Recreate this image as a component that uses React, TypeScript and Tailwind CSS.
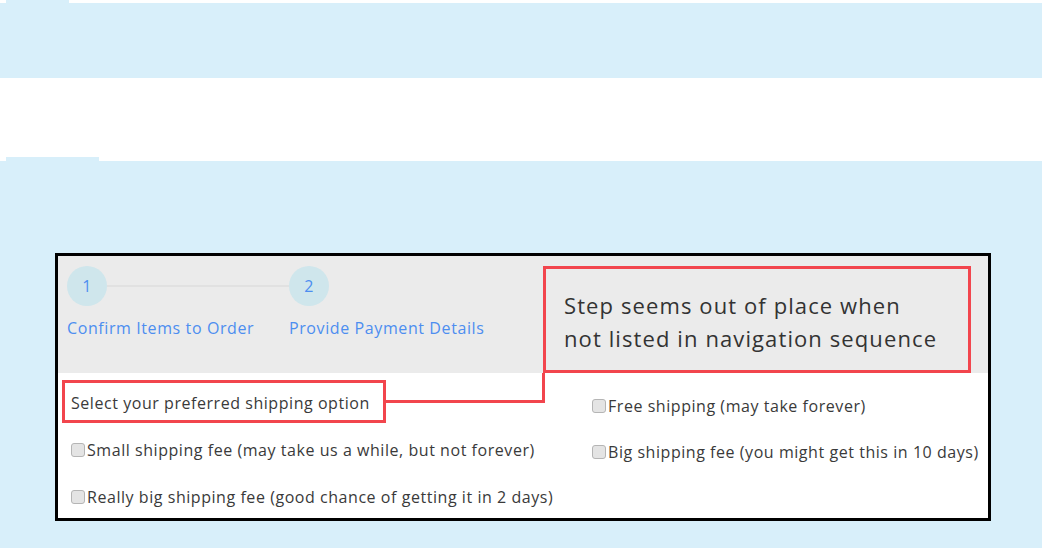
import React from "react";

const Check = () => (
  <span className="inline-block w-[14px] h-[14px] rounded-[3px] border border-[#b5b5b5] bg-[#e4e4e4] mr-[2px] shrink-0" />
);

const Option = ({ label }: { label: string }) => (
  <div className="flex items-center h-[22px]">
    <Check />
    <span>{label}</span>
  </div>
);

export default function App() {
  return (
    <div className="w-[1042px] h-[548px] bg-white flex flex-col overflow-hidden" style={{ fontFamily: '"Open Sans", "Noto Sans", sans-serif' }}>
      <div className="h-[3px] flex pl-[6px]">
        <div className="w-[63px] bg-[#d8effa]" />
      </div>
      <div className="h-[75px] bg-[#d8effa]" />
      <div className="h-[79px]" />
      <div className="h-[4px] flex pl-[6px]">
        <div className="w-[93px] bg-[#d8effa]" />
      </div>
      <div className="flex-1 bg-[#d8effa] pt-[92px] pl-[55px]">
        <div className="relative w-[936px] h-[268px] border-[3px] border-black bg-white flex flex-col">
          {/* header */}
          <div className="h-[117px] bg-[#ebebeb] flex pl-[9px] pt-[10px] tracking-[0.6px]">
            <div className="relative w-[222px] flex flex-col">
              <div className="absolute left-[40px] top-[19px] w-[182px] h-[2px] bg-[#e1e1e1]" />
              <div className="w-[40px] h-[40px] rounded-full bg-[#cfe6ec] flex items-center justify-center text-[16px] text-[#4d8ef0]">1</div>
              <div className="mt-[11px] text-[16px] leading-[22px] text-[#4d8ef0] whitespace-nowrap">Confirm Items to Order</div>
            </div>
            <div className="flex flex-col">
              <div className="w-[40px] h-[40px] rounded-full bg-[#cfe6ec] flex items-center justify-center text-[16px] text-[#4d8ef0]">2</div>
              <div className="mt-[11px] text-[16px] leading-[22px] text-[#4d8ef0] whitespace-nowrap">Provide Payment Details</div>
            </div>
          </div>
          {/* body */}
          <div className="flex pt-[19px] pl-[13px] text-[16px] leading-[22px] tracking-[0.55px] text-[#3a3a3a] whitespace-nowrap">
            <div className="w-[521px] flex flex-col gap-[25px]">
              <div className="h-[22px] flex items-center">Select your preferred shipping option</div>
              <Option label="Small shipping fee (may take us a while, but not forever)" />
              <Option label="Really big shipping fee (good chance of getting it in 2 days)" />
            </div>
            <div className="flex flex-col gap-[24px] pt-[3px]">
              <Option label="Free shipping (may take forever)" />
              <Option label="Big shipping fee (you might get this in 10 days)" />
            </div>
          </div>

          {/* annotations */}
          <div className="absolute left-[485px] top-[10px] w-[428px] h-[107px] border-[3px] border-[#f2454d] bg-[#ebebeb] pl-[18px] pt-[20px] text-[22px] leading-[33px] tracking-[1.1px] text-[#333333] whitespace-nowrap">
            <div>Step seems out of place when</div>
            <div>not listed in navigation sequence</div>
          </div>
          <div className="absolute left-[327px] top-[117px] w-[160px] h-[30px] border-r-[3px] border-b-[3px] border-[#f2454d]" />
          <div className="absolute left-[4px] top-[124px] w-[324px] h-[43px] border-[3px] border-[#f2454d]" />
        </div>
      </div>
    </div>
  );
}
